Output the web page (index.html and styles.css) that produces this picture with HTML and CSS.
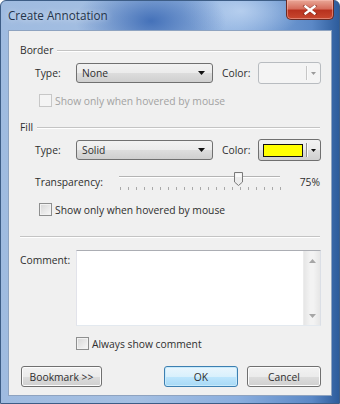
FILE: index.html
```html
<!DOCTYPE html>
<html>
<head>
<meta charset="utf-8">
<link rel="stylesheet" href="styles.css">
</head>
<body>
<div class="window">
  <div class="titlebar">
    <span class="title">Create Annotation</span>
    <div class="close">
      <svg width="16" height="10" viewBox="0 0 16 10"><path d="M3 1 L13 9 M13 1 L3 9" stroke="#5a1a12" stroke-width="3.4" stroke-linecap="square" opacity=".45"/><path d="M3.5 1.5 L12.5 8.5 M12.5 1.5 L3.5 8.5" stroke="#fff" stroke-width="2.4" stroke-linecap="square"/></svg>
    </div>
  </div>
  <div class="client">
    <div class="group-head"><span>Border</span><i class="rule"></i></div>
    <div class="row">
      <span class="lbl">Type:</span>
      <div class="combo"><span>None</span><svg class="arr" width="7" height="4" viewBox="0 0 7 4"><path d="M0 0H7L3.5 4Z" fill="#111"/></svg></div>
      <span class="clbl">Color:</span>
      <div class="cbtn disabled"><span class="swatch-empty"></span><i class="div"></i><svg width="5" height="3" viewBox="0 0 5 3"><path d="M0 0H5L2.5 3Z" fill="#9a9a9a"/></svg></div>
    </div>
    <div class="cbrow disabled"><span class="box"></span><span>Show only when hovered by mouse</span></div>

    <div class="group-head fill"><span>Fill</span><i class="rule"></i></div>
    <div class="row">
      <span class="lbl">Type:</span>
      <div class="combo"><span>Solid</span><svg class="arr" width="7" height="4" viewBox="0 0 7 4"><path d="M0 0H7L3.5 4Z" fill="#111"/></svg></div>
      <span class="clbl">Color:</span>
      <div class="cbtn"><span class="swatch"></span><i class="div"></i><svg width="5" height="3" viewBox="0 0 5 3"><path d="M0 0H5L2.5 3Z" fill="#111"/></svg></div>
    </div>
    <div class="trow">
      <span class="tlbl">Transparency:</span>
      <div class="slider">
        <i class="track"></i>
        <i class="ticks"></i>
        <svg class="thumb" width="9" height="14" viewBox="0 0 9 14"><path d="M0.5 0.5H8.5V10L4.5 13.5L0.5 10Z" fill="#ececec" stroke="#7a7a7a"/><path d="M1.5 1.5H7.5V5H1.5Z" fill="#fafafa"/></svg>
      </div>
      <span class="pct">75%</span>
    </div>
    <div class="cbrow"><span class="box"></span><span>Show only when hovered by mouse</span></div>

    <i class="sep"></i>

    <div class="comment">
      <span class="clabel">Comment:</span>
      <div class="memo">
        <div class="memo-text"></div>
        <div class="sbar">
          <svg width="7" height="4" viewBox="0 0 7 4"><path d="M0 4H7L3.5 0Z" fill="#a6a6a6"/></svg>
          <svg width="7" height="4" viewBox="0 0 7 4"><path d="M0 0H7L3.5 4Z" fill="#a6a6a6"/></svg>
        </div>
      </div>
    </div>
    <div class="cbrow always"><span class="box"></span><span>Always show comment</span></div>

    <div class="buttons">
      <button class="btn bm">Bookmark &gt;&gt;</button>
      <span class="spacer"></span>
      <button class="btn ok">OK</button>
      <button class="btn">Cancel</button>
    </div>
  </div>
</div>
</body>
</html>
```
FILE: styles.css
```css
* { box-sizing: border-box; }
html, body { margin: 0; padding: 0; }
body {
  width: 340px; height: 404px; overflow: hidden;
  font-family: "Open Sans", "Noto Sans", sans-serif;
  font-size: 10.3px; color: #2e2e2e;
}
.window {
  width: 340px; height: 404px;
  display: flex; flex-direction: column;
  border: 1px solid #3d5d86;
  border-radius: 6px 6px 0 0;
  background:
    radial-gradient(ellipse 75px 42px at 150px 20px, rgba(52,100,178,.85), rgba(52,100,178,0)),
    radial-gradient(ellipse 60px 30px at 240px 10px, rgba(200,220,245,.7), rgba(200,220,245,0)),
    linear-gradient(to right, #9fbbe0 0%, #a4bfe2 40%, #8aaede 70%, #5b88c6 92%, #2d5c9c 100%);
}
.titlebar {
  height: 29px; flex: none;
  display: flex; align-items: flex-start;
  padding-left: 7px;
}
.title {
  font-size: 11.7px; color: #24344a;
  margin-top: 6px;
  text-shadow: 0 0 6px rgba(255,255,255,.8);
}
.close {
  margin-left: auto; margin-right: 5px; margin-top: -1px;
  width: 48px; height: 20px;
  border: 1px solid #6b2a22; border-top: none;
  border-radius: 0 0 5px 5px;
  background: linear-gradient(#e9a797 0%, #d66e5d 45%, #b8321f 55%, #c8482f 100%);
  box-shadow: inset 0 0 0 1px rgba(255,200,190,.45);
  display: flex; align-items: center; justify-content: center;
}
.client {
  flex: 1;
  margin: 0 7px 7px 7px;
  background: #f0f0f0;
  border: 1px solid #8ea3c0;
  padding: 0 10px 0 11px;
  display: flex; flex-direction: column;
}
.group-head {
  height: 14px; margin-top: 12px;
  display: flex; align-items: center; gap: 4px;
}
.group-head.fill { margin-top: 13px; }
.rule {
  flex: 1; height: 2px;
  border-top: 1px solid #c4c4c4; border-bottom: 1px solid #fff;
  margin-top: 1px; margin-right: 1px;
}
.row {
  height: 22px; margin-top: 5px;
  display: flex; align-items: center;
  padding-left: 15px;
}
.lbl { width: 41px; }
.combo {
  width: 137px; height: 20px;
  border: 1px solid #707070; border-radius: 3px;
  background: linear-gradient(#f2f2f2 0%, #ebebeb 50%, #dddddd 50%, #cfcfcf 100%);
  display: flex; align-items: center;
  padding: 0 7px 0 5px;
}
.combo span { flex: 1; }
.clbl { margin-left: 9px; width: 36px; }
.cbtn {
  width: 63px; height: 22px;
  border: 1px solid #707070; border-radius: 3px;
  background: linear-gradient(#f2f2f2 0%, #ebebeb 50%, #dddddd 50%, #cfcfcf 100%);
  display: flex; align-items: center;
  padding-left: 4px;
}
.cbtn.disabled {
  border-color: #b8bcc0;
  background: #f4f4f4;
}
.swatch {
  width: 40px; height: 13px;
  background: #ffff00; border: 1px solid #111;
}
.swatch-empty { width: 40px; height: 13px; }
.cbtn .div {
  width: 1px; height: 14px; background: #8c8c8c;
  margin-left: 3px; margin-right: 4px;
  box-shadow: 1px 0 0 #fafafa;
}
.cbtn.disabled .div { background: #c6c6c6; }
.cbrow {
  height: 13px; margin-top: 10px;
  display: flex; align-items: center; gap: 3px;
  padding-left: 19px;
}
.box {
  width: 13px; height: 13px;
  border: 1px solid #8e8f8f;
  background: linear-gradient(135deg, #d6d6d6, #f8f8f8);
  box-shadow: inset 0 0 0 1px #f2f2f2;
}
.cbrow.disabled { color: #a2a2a2; }
.cbrow.disabled .box { border-color: #c7c7c7; background: #f4f4f4; box-shadow: none; }
.trow {
  height: 22px; margin-top: 10px;
  display: flex; align-items: center;
  padding-left: 15px;
}
.tlbl { width: 84px; }
.slider {
  position: relative;
  width: 161px; height: 22px;
}
.track {
  position: absolute; left: 0; right: 0; top: 5px;
  height: 2px; border-top: 1px solid #b4b4b4; border-bottom: 1px solid #fff;
}
.ticks {
  position: absolute; left: 1px; top: 16px;
  width: 161px; height: 3px;
  background: repeating-linear-gradient(to right, #a9a9a9 0 1px, transparent 1px 8px);
}
.thumb { position: absolute; left: 115px; top: 1px; }
.pct { flex: 1; text-align: right; padding-right: 1px; }
.sep {
  display: block; height: 2px; margin-top: 20px; margin-right: 1px;
  border-top: 1px solid #c4c4c4; border-bottom: 1px solid #fff;
}
.comment {
  margin-top: 12px;
  display: flex; align-items: flex-start;
}
.clabel { width: 56px; margin-top: 3px; }
.memo {
  flex: 1; height: 76px;
  border: 1px solid #abadb3; border-color: #abadb3 #dbdfe6 #e3e9ef #e2e3ea;
  background: #fff;
  display: flex;
}
.memo-text { flex: 1; }
.sbar {
  width: 17px;
  background: linear-gradient(to right, #e6e6e6, #f3f3f3 40%, #f3f3f3 60%, #e6e6e6);
  border-left: 1px solid #ececec;
  display: flex; flex-direction: column; align-items: center; justify-content: space-between;
  padding: 8px 0 7px;
}
.cbrow.always { margin-top: 11px; padding-left: 56px; }
.buttons {
  margin-top: 16px;
  display: flex; align-items: center; gap: 9px;
}
.spacer { flex: 1; }
.btn {
  font: inherit; color: #2e2e2e;
  height: 21px; width: 74px;
  border: 1px solid #707070; border-radius: 3px;
  background: linear-gradient(#f2f2f2 0%, #ebebeb 50%, #dddddd 50%, #cfcfcf 100%);
  box-shadow: inset 0 0 0 1px #fcfcfc;
  padding: 0;
}
.btn.bm { width: 81px; margin-left: 1px; }
.btn.ok {
  border-color: #3c7fb1;
  background: linear-gradient(#eaf6fd 0%, #d9f0fc 50%, #bee6fd 50%, #a7d9f5 100%);
  box-shadow: inset 0 0 0 1px #c8eafb;
}
```
